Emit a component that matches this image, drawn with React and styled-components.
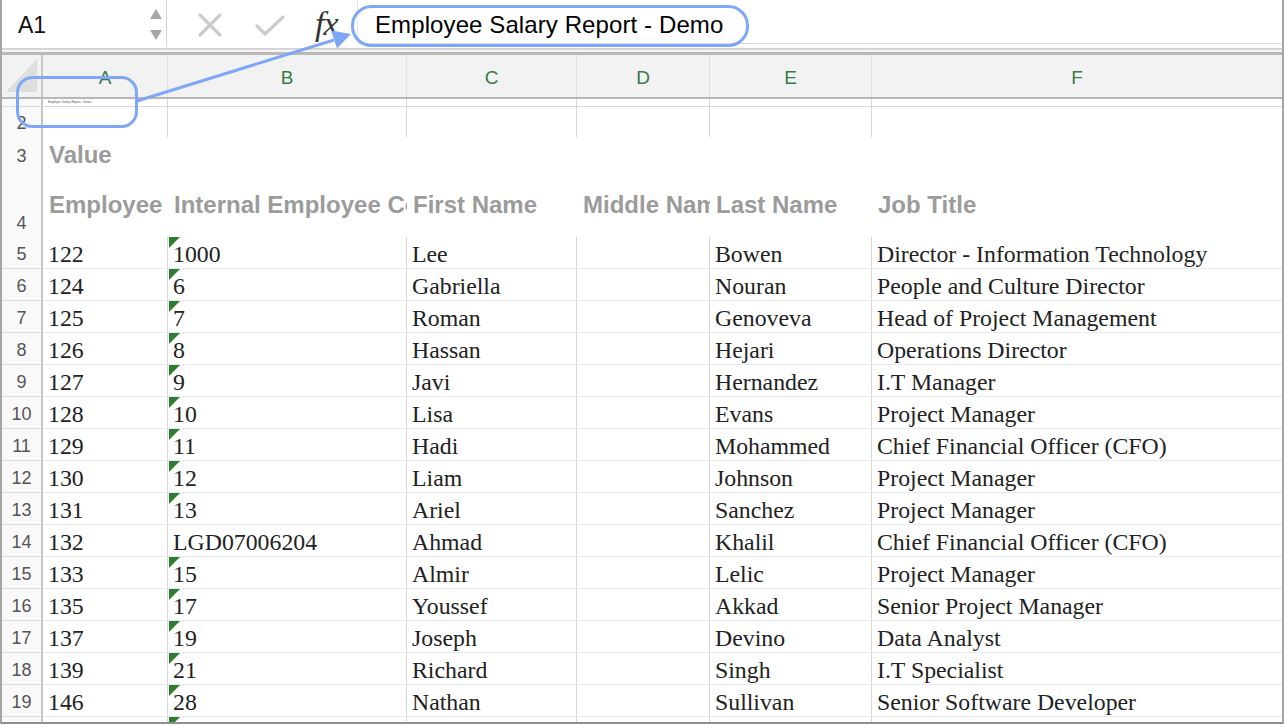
import styled, { createGlobalStyle } from 'styled-components';

const GlobalStyle = createGlobalStyle`
	html, body {
		margin: 0;
		padding: 0;
		background: #ffffff;
	}
`;

const COLS = '41px 125px 239px 170px 133px 162px 1fr';
const LETTERS = ['A', 'B', 'C', 'D', 'E', 'F'];

const rows = [
	['122', '1000', 'Lee', '', 'Bowen', 'Director - Information Technology'],
	['124', '6', 'Gabriella', '', 'Nouran', 'People and Culture Director'],
	['125', '7', 'Roman', '', 'Genoveva', 'Head of Project Management'],
	['126', '8', 'Hassan', '', 'Hejari', 'Operations Director'],
	['127', '9', 'Javi', '', 'Hernandez', 'I.T Manager'],
	['128', '10', 'Lisa', '', 'Evans', 'Project Manager'],
	['129', '11', 'Hadi', '', 'Mohammed', 'Chief Financial Officer (CFO)'],
	['130', '12', 'Liam', '', 'Johnson', 'Project Manager'],
	['131', '13', 'Ariel', '', 'Sanchez', 'Project Manager'],
	['132', 'LGD07006204', 'Ahmad', '', 'Khalil', 'Chief Financial Officer (CFO)'],
	['133', '15', 'Almir', '', 'Lelic', 'Project Manager'],
	['135', '17', 'Youssef', '', 'Akkad', 'Senior Project Manager'],
	['137', '19', 'Joseph', '', 'Devino', 'Data Analyst'],
	['139', '21', 'Richard', '', 'Singh', 'I.T Specialist'],
	['146', '28', 'Nathan', '', 'Sullivan', 'Senior Software Developer'],
];

const headings = ['Employee', 'Internal Employee Code', 'First Name', 'Middle Name', 'Last Name', 'Job Title'];

const App = () => {
	return (
		<>
			<GlobalStyle />
			<Frame>
				<FormulaBar>
					<NameBox>
						<span>A1</span>
						<Spinner>
							<svg width="14" height="36" viewBox="0 0 14 36">
								<polygon points="7,3 13,13 1,13" fill="#a6a6a6" />
								<polygon points="1,24 13,24 7,34" fill="#a6a6a6" />
							</svg>
						</Spinner>
					</NameBox>
					<Actions>
						<svg width="26" height="26" viewBox="0 0 26 26">
							<path d="M3 3 L23 23 M23 3 L3 23" stroke="#cbcbcb" strokeWidth="3.2" strokeLinecap="round" />
						</svg>
						<svg width="30" height="22" viewBox="0 0 30 22">
							<path d="M2 11 L10 19 L28 2" stroke="#cbcbcb" strokeWidth="3.2" fill="none" strokeLinecap="round" strokeLinejoin="round" />
						</svg>
						<Fx>fx</Fx>
					</Actions>
					<FormulaInput>Employee Salary Report - Demo</FormulaInput>
				</FormulaBar>
				<Divider />

				<HeaderRow>
					<Corner>
						<svg width="32" height="34" viewBox="0 0 32 34">
							<polygon points="31,0 31,33 0,33" fill="#dedede" />
						</svg>
					</Corner>
					{LETTERS.map((l) => (
						<ColLetter key={l}>{l}</ColLetter>
					))}
				</HeaderRow>

				<Row $h={8} $line="#d6d6d6">
					<RowNum />
					<Cell $grid>
						<Tiny>Employee Salary Report - Demo</Tiny>
					</Cell>
					<Cell $grid />
					<Cell $grid />
					<Cell $grid />
					<Cell $grid />
					<Cell />
				</Row>

				<Row $h={30}>
					<RowNum>2</RowNum>
					<Cell $grid />
					<Cell $grid />
					<Cell $grid />
					<Cell $grid />
					<Cell $grid />
					<Cell />
				</Row>

				<Row $h={33}>
					<RowNum>3</RowNum>
					<HeadCell>Value</HeadCell>
					<HeadCell />
					<HeadCell />
					<HeadCell />
					<HeadCell />
					<HeadCell />
				</Row>

				<Row $h={67}>
					<RowNum>4</RowNum>
					{headings.map((h) => (
						<HeadCell key={h}>{h}</HeadCell>
					))}
				</Row>

				{rows.map((r, i) => (
					<Row key={r[0]} $h={32} $line="#e4ebf2">
						<RowNum>{i + 5}</RowNum>
						{r.map((v, j) => (
							<Cell key={j} $grid={j < 5} $flag={j === 1 && /^\d+$/.test(v)}>
								{v}
							</Cell>
						))}
					</Row>
				))}

				<Row $h={10}>
					<RowNum />
					<Cell $grid />
					<Cell $grid $flag />
					<Cell $grid />
					<Cell $grid />
					<Cell $grid />
					<Cell />
				</Row>

				<Marks width="1284" height="726" viewBox="0 0 1284 726">
					<rect x="17.5" y="77.5" width="119" height="49" rx="15" fill="none" stroke="#7ea7f8" strokeWidth="3" />
					<rect x="352.5" y="6.5" width="395" height="39" rx="19" fill="none" stroke="#7ea7f8" strokeWidth="3" />
					<line x1="137" y1="101" x2="334" y2="40" stroke="#7ea7f8" strokeWidth="3" />
					<polygon points="351,34 337,48.5 331,30.5" fill="#7ea7f8" />
				</Marks>
			</Frame>
		</>
	);
};

export default App;

const Frame = styled.div`
	position: relative;
	width: 1284px;
	height: 724px;
	box-sizing: border-box;
	border-left: 2px solid #a5a5a5;
	border-right: 2px solid #a5a5a5;
	border-bottom: 2px solid #8f8f8f;
	overflow: hidden;
	font-family: 'Liberation Sans', Arial, sans-serif;
	background: #ffffff;
`;

const FormulaBar = styled.div`
	display: flex;
	height: 49px;
	box-sizing: border-box;
	border-bottom: 1px solid #d2d2d2;
`;

const NameBox = styled.div`
	display: flex;
	align-items: center;
	justify-content: space-between;
	width: 165px;
	height: 47px;
	box-sizing: border-box;
	padding: 2px 3px 0 16px;
	border-right: 1px solid #d4d4d4;
	font-size: 23px;
	color: #111;

	span {
		margin-top: 1px;
	}
`;

const Spinner = styled.div`
	display: flex;
	align-items: center;
	margin-top: -2px;
`;

const Actions = styled.div`
	display: flex;
	align-items: center;
	width: 190px;
	padding-left: 30px;
	box-sizing: border-box;

	svg:nth-child(1) {
		margin-right: 32px;
		margin-top: 2px;
	}

	svg:nth-child(2) {
		margin-right: 30px;
		margin-top: 3px;
	}
`;

const Fx = styled.span`
	font-family: 'Liberation Serif', 'Times New Roman', serif;
	font-style: italic;
	font-size: 34px;
	color: #333;
	margin-top: -1px;
	letter-spacing: -1px;
`;

const FormulaInput = styled.div`
	flex: 1;
	display: flex;
	align-items: center;
	height: 44px;
	box-sizing: border-box;
	padding: 6px 0 0 17px;
	border-left: 1px solid #e6e6e6;
	border-bottom: 1px solid #dcdcdc;
	font-size: 24px;
	color: #000;
	letter-spacing: 0.1px;
`;

const Divider = styled.div`
	height: 6px;
	box-sizing: border-box;
	border-top: 1px solid #d9d9d9;
	border-bottom: 3px solid #b9b9b9;
	background: #f4f4f4;
`;

const HeaderRow = styled.div`
	display: grid;
	grid-template-columns: ${COLS};
	height: 44px;
	box-sizing: border-box;
	border-bottom: 2px solid #b7b7b7;
	background: #f2f2f2;
`;

const Corner = styled.div`
	display: flex;
	align-items: flex-end;
	justify-content: flex-end;
	padding: 0 3px 4px 0;
	border-right: 2px solid #c6c6c6;
`;

const ColLetter = styled.div`
	display: flex;
	align-items: center;
	justify-content: center;
	padding-top: 4px;
	border-right: 1px solid #e0e0e0;
	font-size: 19px;
	color: #3a7a4b;

	&:last-child {
		border-right: none;
	}
`;

const Row = styled.div`
	display: grid;
	grid-template-columns: ${COLS};
	height: ${(p) => p.$h}px;
	box-sizing: border-box;
	border-bottom: ${(p) => (p.$line ? `1px solid ${p.$line}` : 'none')};
`;

const RowNum = styled.div`
	display: flex;
	align-items: flex-end;
	justify-content: center;
	padding-bottom: 4px;
	margin-bottom: -1px;
	box-sizing: border-box;
	background: #f9f9f9;
	border-right: 2px solid #c6c6c6;
	border-bottom: 1px solid #dcdcdc;
	font-size: 18px;
	line-height: 20px;
	color: #555;
	overflow: hidden;
`;

const Cell = styled.div`
	position: relative;
	display: flex;
	align-items: center;
	padding: 4px 0 0 5px;
	box-sizing: border-box;
	border-right: ${(p) => (p.$grid ? '1px solid #d6d6d6' : 'none')};
	font-family: 'Liberation Serif', 'Times New Roman', serif;
	font-size: 23.8px;
	color: #222;
	white-space: nowrap;
	overflow: hidden;

	&::before {
		content: '';
		display: ${(p) => (p.$flag ? 'block' : 'none')};
		position: absolute;
		top: 0;
		left: 1px;
		width: 0;
		height: 0;
		border-top: 11px solid #2f7d31;
		border-right: 11px solid transparent;
	}
`;

const HeadCell = styled.div`
	display: flex;
	align-items: center;
	padding: 2px 0 0 6px;
	box-sizing: border-box;
	font-weight: bold;
	font-size: 24px;
	color: #9b9b9b;
	white-space: nowrap;
	overflow: hidden;
`;

const Tiny = styled.span`
	font-family: 'Liberation Sans', Arial, sans-serif;
	font-size: 3px;
	line-height: 3px;
	color: #555;
	align-self: flex-start;
	margin-top: -2px;
`;

const Marks = styled.svg`
	position: absolute;
	top: 0;
	left: -2px;
	pointer-events: none;
`;
